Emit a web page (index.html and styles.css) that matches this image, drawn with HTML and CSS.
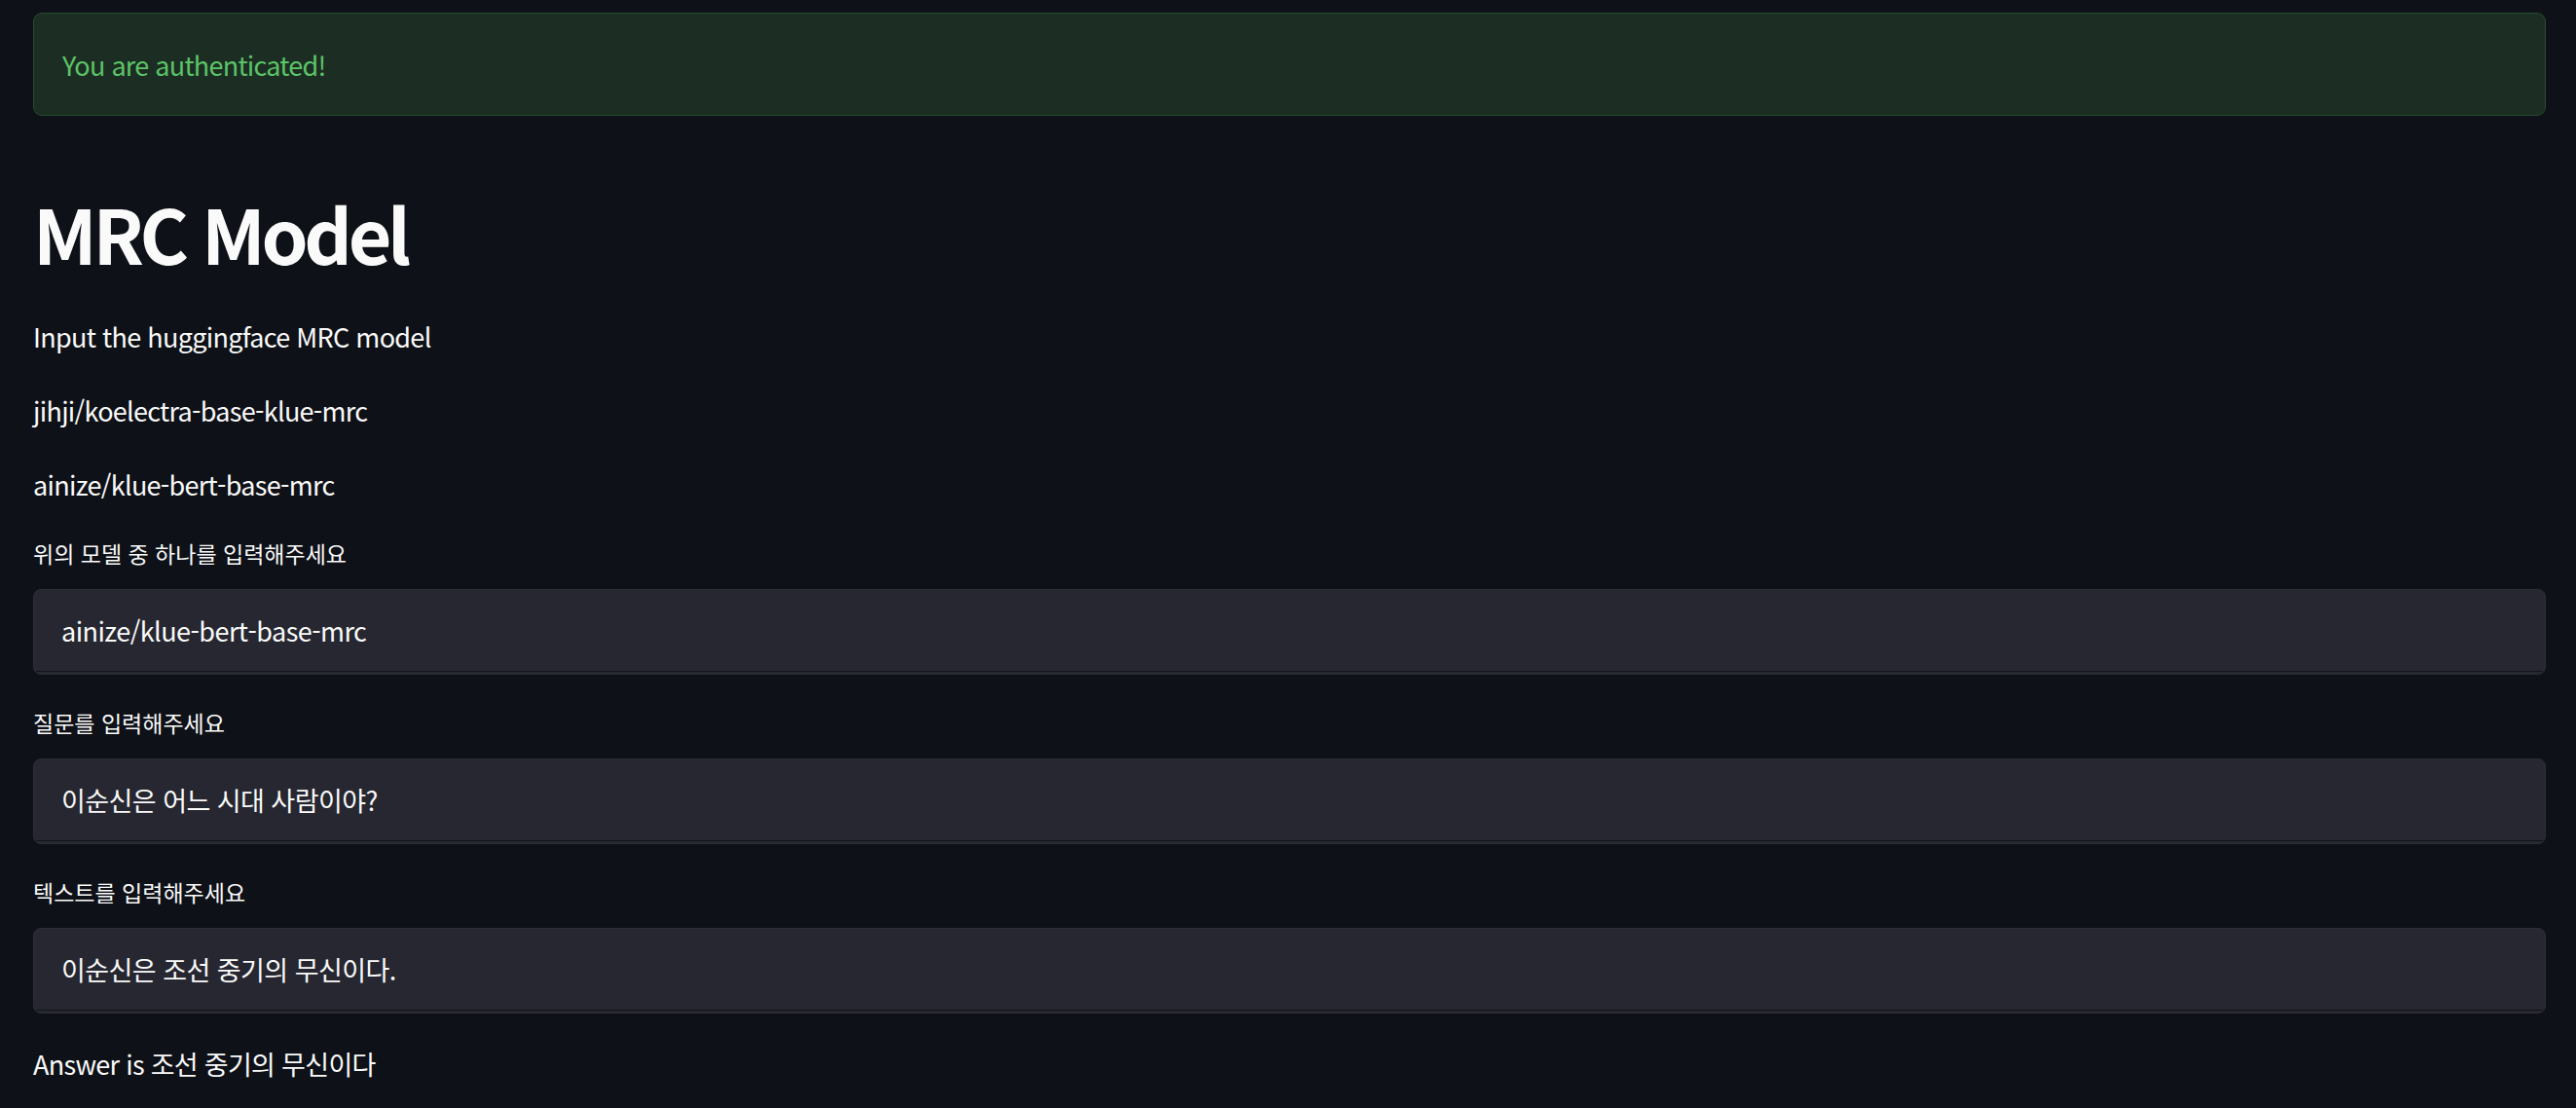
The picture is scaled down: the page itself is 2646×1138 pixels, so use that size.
FILE: index.html
```html
<!DOCTYPE html>
<html lang="ko">
<head>
<meta charset="utf-8">
<title>MRC Model</title>
<link rel="stylesheet" href="styles.css">
</head>
<body>
<main class="main">
  <div class="alert">You are authenticated!</div>
  <h1 class="title">MRC Model</h1>
  <p class="text">Input the huggingface MRC model</p>
  <p class="text">jihji/koelectra-base-klue-mrc</p>
  <p class="text">ainize/klue-bert-base-mrc</p>
  <div class="widget">
    <label class="label">위의 모델 중 하나를 입력해주세요</label>
    <div class="input"><div class="field">ainize/klue-bert-base-mrc</div></div>
  </div>
  <div class="widget">
    <label class="label">질문를 입력해주세요</label>
    <div class="input"><div class="field">이순신은 어느 시대 사람이야?</div></div>
  </div>
  <div class="widget">
    <label class="label">텍스트를 입력해주세요</label>
    <div class="input"><div class="field">이순신은 조선 중기의 무신이다.</div></div>
  </div>
  <p class="text answer">Answer is 조선 중기의 무신이다</p>
</main>
</body>
</html>
```

FILE: styles.css
```css
html, body {
  margin: 0;
  padding: 0;
  background: #0e1117;
}
body {
  font-family: "Noto Sans CJK KR", "Noto Sans", sans-serif;
  color: #fafafa;
  font-size: 27px;
}
.main {
  display: flex;
  flex-direction: column;
  gap: 33px;
  padding: 13px 31px 0 34px;
}
.alert {
  box-sizing: border-box;
  height: 106px;
  display: flex;
  align-items: center;
  padding: 0 29px;
  background: #1c2e23;
  border: 1px solid #274a2f;
  border-radius: 9px;
  color: #5cc468;
  font-size: 27px;
  line-height: 43px;
  letter-spacing: -0.75px;
}
.title {
  margin: 0;
  padding: 41px 0 7px 0;
  font-size: 77px;
  line-height: 91px;
  font-weight: 700;
  letter-spacing: -4.3px;
}
.text {
  margin: 0;
  font-size: 27px;
  line-height: 43px;
  letter-spacing: -0.7px;
}
.answer {
  margin-top: -3px;
}
.widget {
  display: flex;
  flex-direction: column;
}
.label {
  font-size: 23px;
  line-height: 32px;
  margin-bottom: 21px;
}
.input {
  box-sizing: border-box;
  height: 88px;
  background: #262730;
  border: 1px solid #2d2e38;
  border-radius: 8px;
  padding: 0 2px 2px 2px;
  display: flex;
}
.field {
  flex: 1;
  display: flex;
  align-items: center;
  padding-left: 26px;
  border-bottom: 1px solid #14151b;
  font-size: 27px;
  line-height: 43px;
  letter-spacing: -0.55px;
}
```
